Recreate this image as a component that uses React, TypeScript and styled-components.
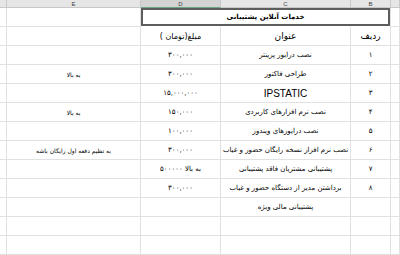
import { Fragment } from "react";
import styled, { createGlobalStyle } from "styled-components";

const Global = createGlobalStyle`
    html, body { margin: 0; padding: 0; background: #fff; overflow: hidden; }
`;

const COLS = "7px 134px 80px 130px 40px 9px";

const Sheet = styled.div`
    width: 400px;
    height: 255px;
    overflow: hidden;
    display: grid;
    grid-template-columns: ${COLS};
    grid-auto-rows: 19px;
    grid-template-rows: 8px;
    font-family: "DejaVu Sans", "Liberation Sans", sans-serif;
    color: #000;
`;

const ColHead = styled.div<{ $active?: boolean }>`
    background: ${p => (p.$active ? "#d3d3d3" : "#e6e6e6")};
    border-right: 1px solid #c8c8c8;
    border-bottom: 1px solid ${p => (p.$active ? "#6aa584" : "#c8c8c8")};
    box-sizing: border-box;
    font: 6px "Liberation Sans", Arial, sans-serif;
    color: #444;
    display: flex;
    align-items: center;
    justify-content: center;
    line-height: 1;
    overflow: hidden;
`;

const Cell = styled.div<{ $size?: number; $latin?: boolean }>`
    box-sizing: border-box;
    border-right: 1px solid #e1e1e1;
    border-bottom: 1px solid #e1e1e1;
    display: flex;
    align-items: center;
    justify-content: center;
    direction: rtl;
    white-space: nowrap;
    font-size: ${p => p.$size ?? 7}px;
    font-family: ${p => (p.$latin ? `"Liberation Sans", Arial, sans-serif` : `"DejaVu Sans", sans-serif`)};
    position: relative;
    z-index: 1;
`;

const Title = styled(Cell)`
    grid-column: span 3;
    font-weight: bold;
    font-size: 7px;
    box-shadow: inset 0 0 0 2px #5d5d5d;
    border-bottom-color: #fff;
`;

type Row = { e?: string; d?: string; c?: string; b?: string; cSize?: number; latin?: boolean };

const rows: Row[] = [
    { d: "۳۰۰,۰۰۰", c: "نصب درایور پرینتر", b: "۱" },
    { e: "به بالا", d: "۳۰۰,۰۰۰", c: "طراحی فاکتور", b: "۲" },
    { d: "۱۵,۰۰۰,۰۰۰", c: "IPSTATIC", b: "۳", cSize: 10, latin: true },
    { e: "به بالا", d: "۱۵۰,۰۰۰", c: "نصب نرم افزارهای کاربردی", b: "۴" },
    { d: "۱۰۰,۰۰۰", c: "نصب درایورهای ویندوز", b: "۵" },
    { e: "به تظیم دفعه اول رایگان باشه", d: "۳۰۰,۰۰۰", c: "نصب نرم افزار نسخه رایگان حضور و غیاب", b: "۶" },
    { d: "به بالا ۵۰۰۰۰۰", c: "پشتیبانی مشتریان فاقد پشتیبانی", b: "۷" },
    { d: "۳۰۰,۰۰۰", c: "برداشتن مدیر از دستگاه حضور و غیاب", b: "۸" },
    { c: "پشتیبانی مالی ویژه" },
    {},
    {},
];

export default function App() {
    return (
        <>
            <Global />
            <Sheet>
                <ColHead />
                <ColHead>E</ColHead>
                <ColHead $active>D</ColHead>
                <ColHead>C</ColHead>
                <ColHead>B</ColHead>
                <ColHead />

                <Cell />
                <Cell />
                <Title>خدمات آنلاین پشتیبانی</Title>
                <Cell />

                <Cell />
                <Cell />
                <Cell $size={8}>مبلغ(تومان )</Cell>
                <Cell $size={9}>عنوان</Cell>
                <Cell $size={9}>ردیف</Cell>
                <Cell />

                {rows.map((r, i) => (
                    <Fragment key={i}>
                        <Cell />
                        <Cell $size={6}>{r.e}</Cell>
                        <Cell>{r.d}</Cell>
                        <Cell $size={r.cSize} $latin={r.latin}>{r.c}</Cell>
                        <Cell>{r.b}</Cell>
                        <Cell />
                    </Fragment>
                ))}
            </Sheet>
        </>
    );
}
